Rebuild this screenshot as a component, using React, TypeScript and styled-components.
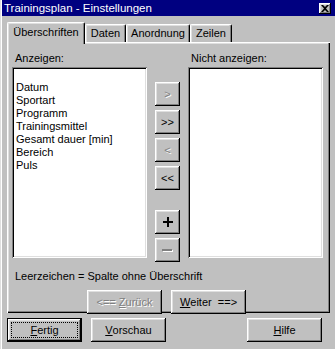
import React from 'react';
import styled, { createGlobalStyle, css } from 'styled-components';

const Global = createGlobalStyle`
  html, body { margin: 0; padding: 0; background: #c0c0c0; }
  body {
    font-family: "Liberation Sans", Arial, sans-serif;
    font-size: 11px;
    color: #000;
  }
  * { box-sizing: border-box; }
`;

const raised = css`
  box-shadow: inset -1px -1px #000, inset 1px 1px #fff, inset -2px -2px #808080, inset 2px 2px #dfdfdf;
`;
const sunken = css`
  box-shadow: inset 1px 1px #808080, inset -1px -1px #fff, inset 2px 2px #000, inset -2px -2px #dfdfdf;
`;

const Window = styled.div`
  width: 335px;
  height: 349px;
  background: #c0c0c0;
  box-shadow: inset 1px 0 #dfdfdf, inset 2px 0 #fff;
  padding-left: 2px;
  display: flex;
  flex-direction: column;
  overflow: hidden;
`;

const TitleBar = styled.div`
  height: 16px;
  background: #000080;
  color: #fff;
  display: flex;
  align-items: center;
  justify-content: space-between;
  padding: 0 4px 0 2px;
  font-size: 11.5px;
  line-height: 16px;
  white-space: nowrap;
`;

const CloseBox = styled.div`
  width: 12px;
  height: 11px;
  background: #c0c0c0;
  ${raised};
  display: flex;
  align-items: center;
  justify-content: center;
`;

const TabRow = styled.div`
  display: flex;
  align-items: flex-end;
  height: 20px;
  margin-top: 6px;
  padding-left: 5px;
`;

const Tab = styled.div<{ $w: number; $active?: boolean }>`
  width: ${(p) => p.$w}px;
  height: ${(p) => (p.$active ? 22 : 18)}px;
  margin-bottom: ${(p) => (p.$active ? -2 : 0)}px;
  position: relative;
  z-index: ${(p) => (p.$active ? 2 : 1)};
  background: #c0c0c0;
  border-top: 1px solid #fff;
  border-left: 1px solid #fff;
  border-right: 1px solid #000;
  border-radius: 2px 2px 0 0;
  box-shadow: inset -1px 0 #808080, inset 1px 1px #dfdfdf;
  display: flex;
  justify-content: center;
  padding-top: ${(p) => (p.$active ? 3 : 2)}px;
  line-height: 13px;
  white-space: nowrap;
`;

const Panel = styled.div`
  margin-left: 5px;
  width: 323px;
  height: 271px;
  background: #c0c0c0;
  box-shadow: inset 1px 1px #fff, inset -1px -1px #000, inset -2px -2px #808080, inset 2px 2px #dfdfdf;
  padding: 10px 0 0 5px;
  display: flex;
  flex-direction: column;
`;

const Columns = styled.div`
  display: grid;
  grid-template-columns: 135px 25px 135px;
  column-gap: 8px;
`;

const Label = styled.div`
  line-height: 13px;
  height: 15px;
  padding-left: 3px;
  white-space: nowrap;
`;

const ListBox = styled.div`
  height: 191px;
  background: #fff;
  ${sunken};
  padding: 1px 2px 2px 4px;
`;

const ListItem = styled.div`
  line-height: 13px;
  height: 13px;
  white-space: nowrap;
`;

const ButtonStack = styled.div`
  display: flex;
  flex-direction: column;
  gap: 4px;
  padding-top: 15px;
`;

const Spacer = styled.div<{ $h: number }>`
  height: ${(p) => p.$h}px;
`;

const Btn = styled.div<{ $w?: number; $h?: number; $disabled?: boolean; $default?: boolean }>`
  width: ${(p) => p.$w ?? 75}px;
  height: ${(p) => p.$h ?? 24}px;
  background: #c0c0c0;
  ${(p) =>
    p.$default
      ? css`
          border: 1px solid #000;
          box-shadow: inset -1px -1px #000, inset 1px 1px #fff, inset -2px -2px #808080, inset 2px 2px #dfdfdf;
        `
      : raised};
  display: flex;
  align-items: center;
  justify-content: center;
  position: relative;
  white-space: pre;
  line-height: 13px;
  color: ${(p) => (p.$disabled ? '#808080' : '#000')};
  text-shadow: ${(p) => (p.$disabled ? '1px 1px 0 #fff' : 'none')};
  u { text-decoration: underline; text-underline-offset: 1px; }
`;

const FocusRing = styled.div`
  position: absolute;
  inset: 3px;
  border: 1px dotted #000;
  pointer-events: none;
`;

const Note = styled.div`
  margin-top: 8px;
  padding-left: 3px;
  line-height: 13px;
  white-space: nowrap;
`;

const NavRow = styled.div`
  display: flex;
  gap: 9px;
  margin-top: 7px;
  padding-left: 75px;
`;

const BottomRow = styled.div`
  display: flex;
  gap: 9px;
  margin-top: 5px;
  padding: 0 13px 0 5px;
`;

const PushRight = styled.div`
  margin-left: auto;
`;

const Plus = () => (
  <svg width="10" height="10" viewBox="0 0 10 10">
    <rect x="4" y="0" width="2" height="10" fill="#000" />
    <rect x="0" y="4" width="10" height="2" fill="#000" />
  </svg>
);

const Minus = () => (
  <svg width="11" height="3" viewBox="0 0 11 3">
    <rect x="1" y="1" width="10" height="2" fill="#fff" />
    <rect x="0" y="0" width="10" height="2" fill="#808080" />
  </svg>
);

const CloseX = () => (
  <svg width="8" height="7" viewBox="0 0 8 7">
    <path d="M0 0h2l2 2 2-2h2L5 3.5 8 7H6L4 5 2 7H0l3-3.5z" fill="#000" />
  </svg>
);

const shown = ['', 'Datum', 'Sportart', 'Programm', 'Trainingsmittel', 'Gesamt dauer [min]', 'Bereich', 'Puls'];

export default function App() {
  return (
    <>
      <Global />
      <Window>
        <TitleBar>
          <span>Trainingsplan - Einstellungen</span>
          <CloseBox>
            <CloseX />
          </CloseBox>
        </TitleBar>
        <TabRow>
          <Tab $w={78} $active>Überschriften</Tab>
          <Tab $w={41}>Daten</Tab>
          <Tab $w={64}>Anordnung</Tab>
          <Tab $w={42}>Zeilen</Tab>
        </TabRow>
        <Panel>
          <Columns>
            <Label>Anzeigen:</Label>
            <div />
            <Label>Nicht anzeigen:</Label>
            <ListBox>
              {shown.map((s, i) => (
                <ListItem key={i}>{s}</ListItem>
              ))}
            </ListBox>
            <ButtonStack>
              <Btn $w={25} $disabled>&gt;</Btn>
              <Btn $w={25}>&gt;&gt;</Btn>
              <Btn $w={25} $disabled>&lt;</Btn>
              <Btn $w={25}>&lt;&lt;</Btn>
              <Spacer $h={12} />
              <Btn $w={25}>
                <Plus />
              </Btn>
              <Btn $w={25}>
                <Minus />
              </Btn>
            </ButtonStack>
            <ListBox />
          </Columns>
          <Note>Leerzeichen = Spalte ohne Überschrift</Note>
          <NavRow>
            <Btn $disabled>
              {'<== '}
              <u>Z</u>
              {'urück'}
            </Btn>
            <Btn>
              <u>W</u>
              {'eiter  ==>'}
            </Btn>
          </NavRow>
        </Panel>
        <BottomRow>
          <Btn $default>
            <FocusRing />
            <u>F</u>ertig
          </Btn>
          <Btn>
            <u>V</u>orschau
          </Btn>
          <PushRight>
            <Btn>
              <u>H</u>ilfe
            </Btn>
          </PushRight>
        </BottomRow>
      </Window>
    </>
  );
}
